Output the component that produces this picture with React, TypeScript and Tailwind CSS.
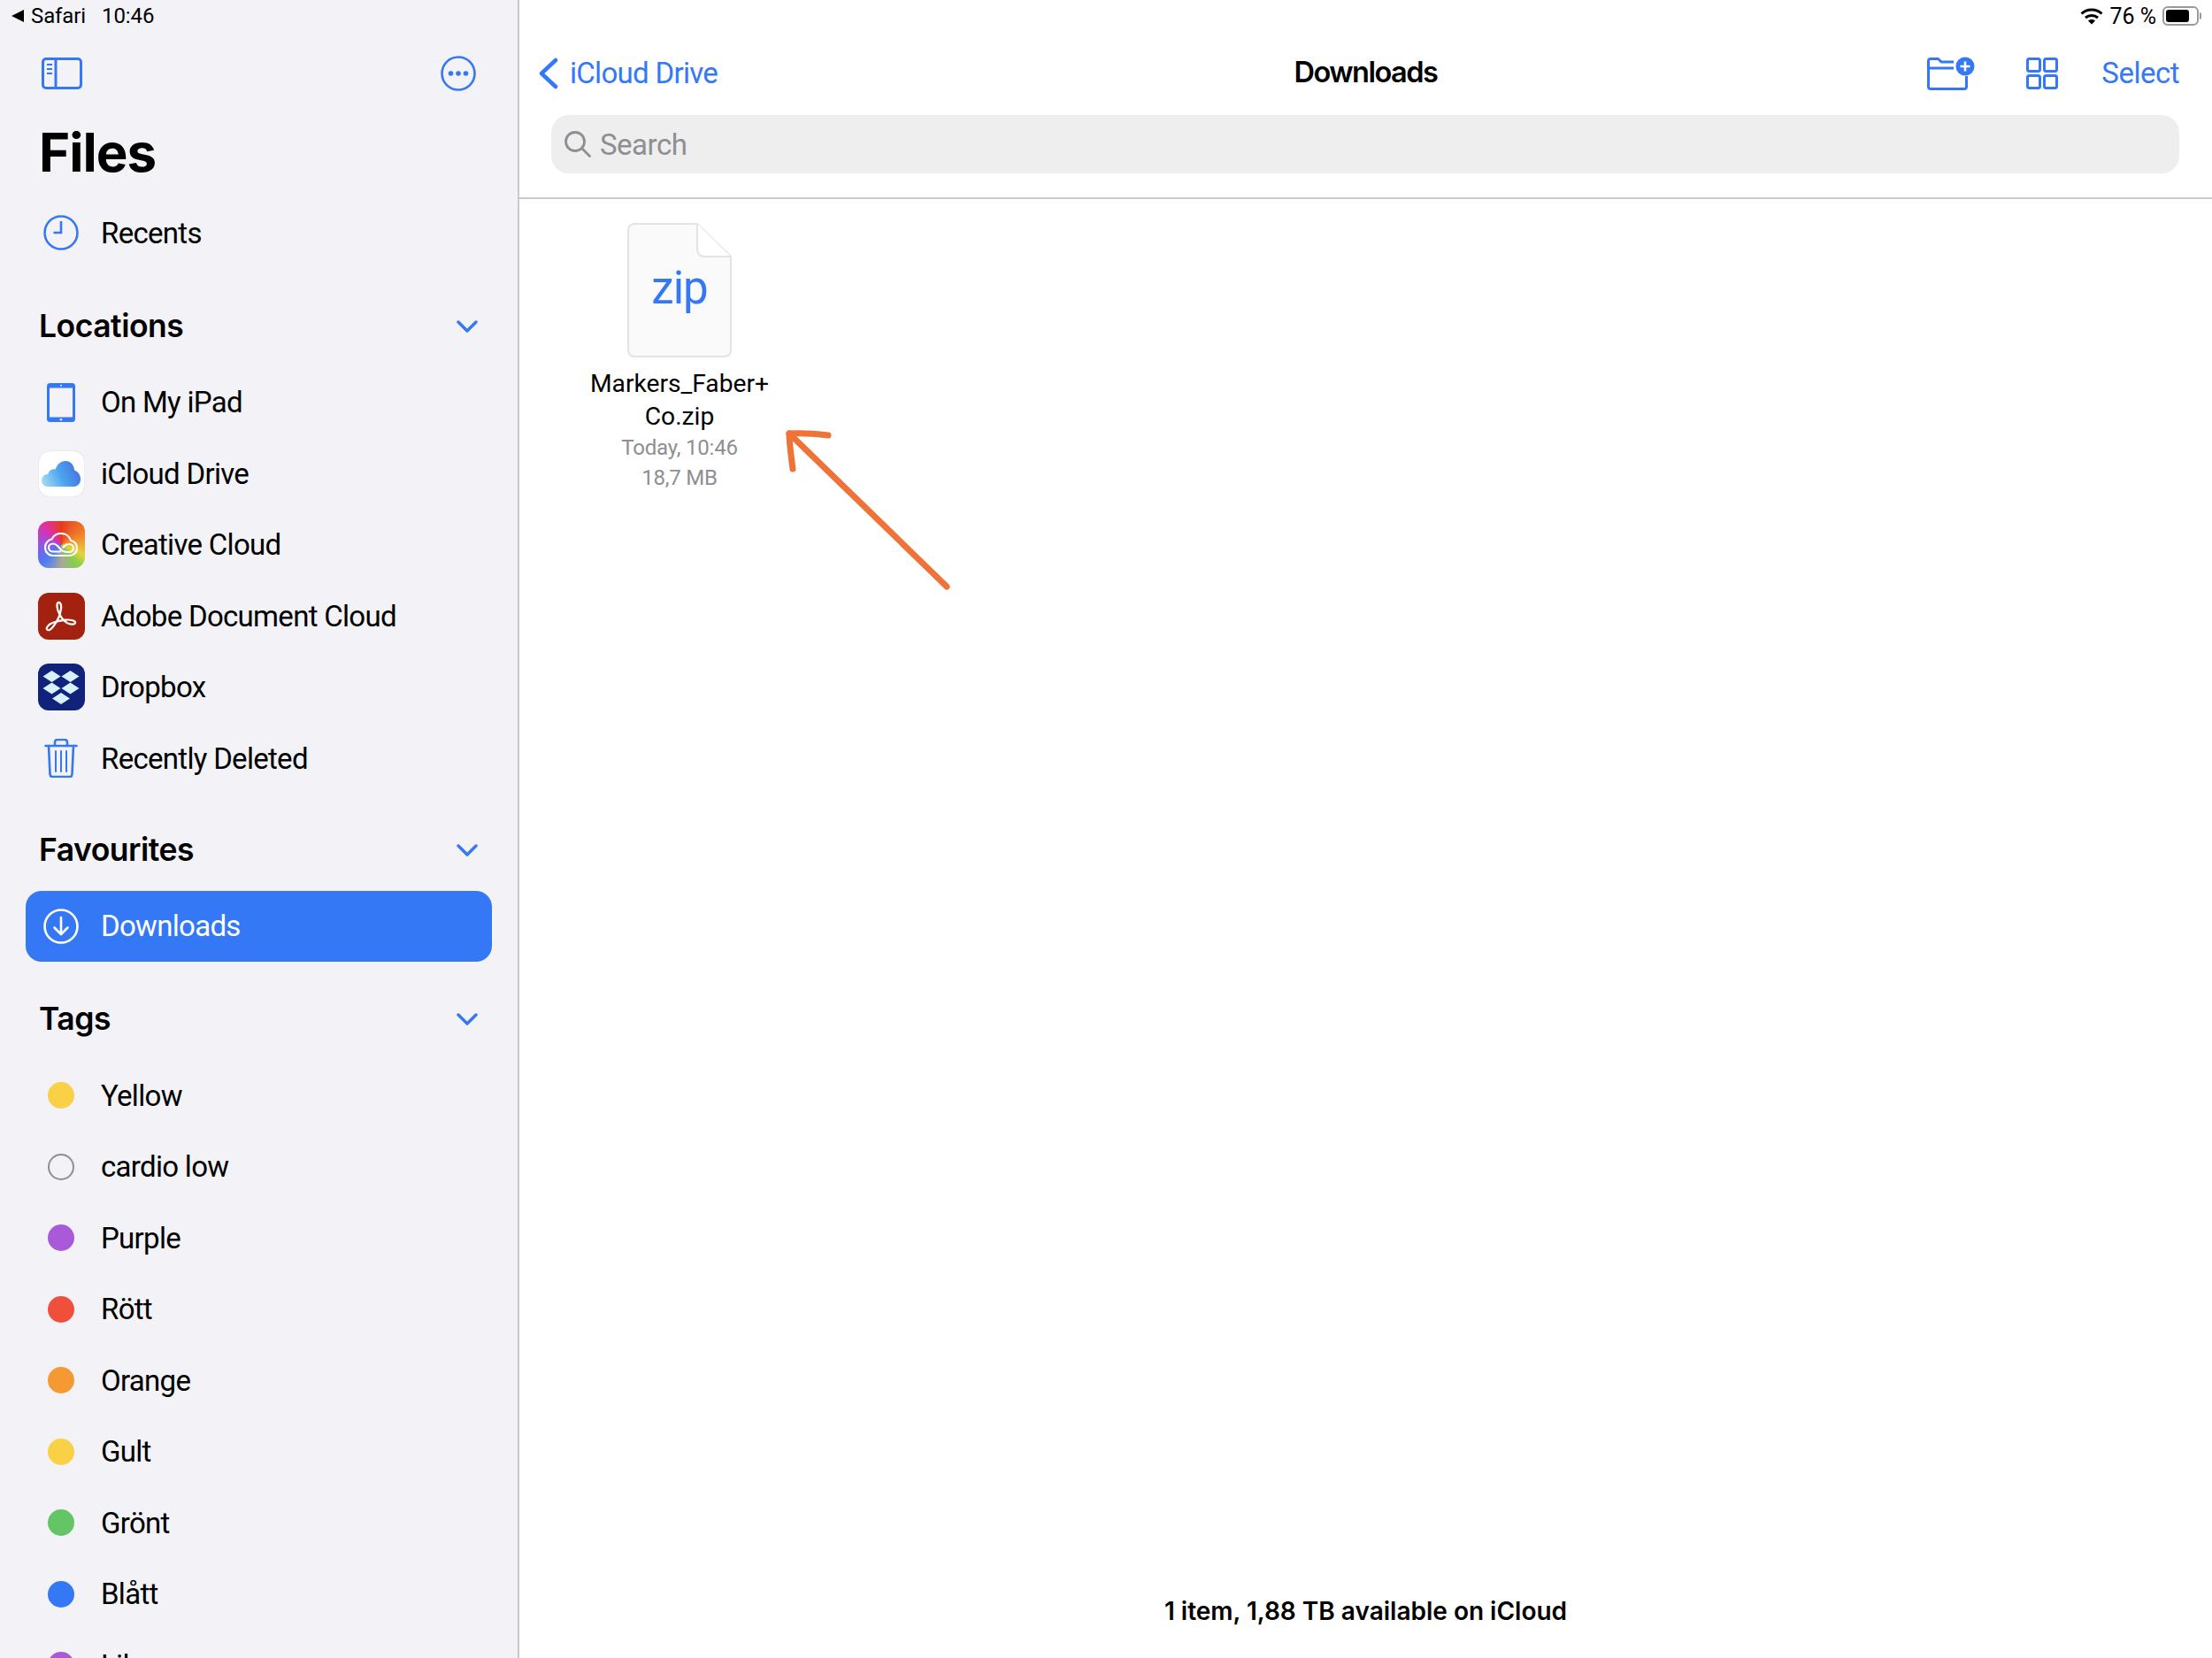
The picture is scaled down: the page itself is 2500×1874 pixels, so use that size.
import { ReactNode } from 'react';

const font = { fontFamily: 'Roboto, "Noto Sans", sans-serif' };
const inter = { fontFamily: 'Inter, "Noto Sans", sans-serif' };

function SidebarToggle() {
    return (
        <svg width="46" height="36" viewBox="0 0 46 36" fill="none" stroke="#3478f6" strokeWidth="3">
            <rect x="1.500" y="1.500" width="43" height="33" rx="3.500" />
            <path d="M16 1.500v33" />
            <path d="M6 8h6M6 13h6M6 18h6" strokeWidth="2.200" />
        </svg>
    );
}

function MoreIcon() {
    return (
        <svg width="40" height="40" viewBox="0 0 40 40" fill="none">
            <circle cx="20" cy="20" r="18.500" stroke="#3478f6" strokeWidth="2.600" />
            <circle cx="11.500" cy="20" r="2.800" fill="#3478f6" />
            <circle cx="20" cy="20" r="2.800" fill="#3478f6" />
            <circle cx="28.500" cy="20" r="2.800" fill="#3478f6" />
        </svg>
    );
}

function Chevron() {
    return (
        <svg width="24" height="16" viewBox="0 0 24 16" fill="none" stroke="#3478f6" strokeWidth="3.400" strokeLinecap="round" strokeLinejoin="round">
            <path d="M2 3l10 10L22 3" />
        </svg>
    );
}

function ClockIcon() {
    return (
        <svg width="40" height="40" viewBox="0 0 40 40" fill="none" stroke="#3478f6" strokeWidth="2.600">
            <circle cx="20" cy="20" r="18.500" />
            <path d="M20 7v13h-8.500" />
        </svg>
    );
}

function IpadIcon() {
    return (
        <svg width="32" height="44" viewBox="0 0 32 44">
            <rect x="0" y="0" width="32" height="44" rx="3.500" fill="#3478f6" />
            <rect x="3" y="5.500" width="26" height="33" fill="#f2f2f7" />
            <circle cx="16" cy="2.800" r="1" fill="#f2f2f7" />
            <circle cx="16" cy="41.200" r="1.300" fill="#f2f2f7" />
        </svg>
    );
}

function ICloudIcon() {
    return (
        <div className="flex h-[51px] w-[51px] items-center justify-center rounded-[12px] bg-white shadow-[0_0_1px_rgba(0,0,0,0.25)]">
            <svg width="44" height="29" viewBox="0 0 45 32" preserveAspectRatio="none">
                <defs>
                    <linearGradient id="cloud" x1="0" y1="0.8" x2="1" y2="0.5">
                        <stop offset="0" stopColor="#a3dcf5" />
                        <stop offset="0.5" stopColor="#4fa6ef" />
                        <stop offset="1" stopColor="#4373e2" />
                    </linearGradient>
                </defs>
                <path d="M7 32C3 32 0 28.500 0 24.500 0 19.500 3.500 16.500 7.500 16.500 8.500 12 12 9.500 16 10.500 18 4 22.500 0 27.500 0 33.500 0 37.500 5 38 11.500 42 13 45 17.500 45 22.500 45 28.500 41.500 32 36.500 32z" fill="url(#cloud)" />
            </svg>
        </div>
    );
}

function CreativeCloudIcon() {
    return (
        <div className="flex h-[53px] w-[53px] items-center justify-center rounded-[12px] bg-[conic-gradient(from_0deg_at_50%_50%,#e63a1e,#f0842a_65deg,#e8d23c_115deg,#86d04a_140deg,#a8a896_180deg,#4a7cf5_225deg,#9a50e4_275deg,#e42ea0_320deg,#e63a1e)]">
            <svg width="38" height="27" viewBox="0 0 38 27" fill="none" stroke="#fff" strokeWidth="2.200" strokeLinecap="round" strokeLinejoin="round">
                <path d="M10 26H28C33.500 26 37 22 37 17.500 37 13 34 9.500 30 9 28.500 4 24 1 19 1 14.500 1 10.500 3.500 8.500 7.500 4 8.500 1 12.500 1 17 1 22 5 26 10 26z" />
                <path d="M18 21.500H10C7 21.500 5 19.500 5 17 5 14.500 7 12.500 10 12.500 14 12.500 17 17 19 19.500 21 21.500 24 22 28 22 31 22 33 20 33 17.500 33 15 31 13 28 13 25 13 23 14.500 21.500 16.500" />
            </svg>
        </div>
    );
}

function AdobeIcon() {
    return (
        <div className="flex h-[53px] w-[53px] items-center justify-center rounded-[12px] bg-[#a3220f]">
            <svg width="36" height="35" viewBox="0 0 36 38" preserveAspectRatio="none" fill="none" stroke="#fff" strokeWidth="2.300" strokeLinecap="round" strokeLinejoin="round">
                <path d="M2 35c1.500 2.500 4.500.5 7-3 4-5.500 8-14 9-22 .5-4-.5-8-2.500-8-2.500 0-2.500 5-1 10 2 6 6 12 10 15 4 2.500 9 2.500 9.500 0 .5-2.500-5-4-11-3.500C13 25 6 27 3.500 30.500 2 32.500 1.500 34 2 35z" />
            </svg>
        </div>
    );
}

function DropboxIcon() {
    return (
        <div className="flex h-[53px] w-[53px] items-center justify-center rounded-[12px] bg-[#10227a]">
            <svg width="42" height="38" viewBox="0 0 42 38" fill="#d9f0fd">
                <path d="M10.500 0L20.500 6.500 10.500 13 .5 6.500z" />
                <path d="M31.500 0L41.500 6.500 31.500 13 21.500 6.500z" />
                <path d="M10.500 13.500L20.500 20 10.500 26.500 .5 20z" />
                <path d="M31.500 13.500L41.500 20 31.500 26.500 21.500 20z" />
                <path d="M21 25L31 31.500 21 38 11 31.500z" />
            </svg>
        </div>
    );
}

function TrashIcon() {
    return (
        <svg width="38" height="44" viewBox="0 0 38 44" fill="none" stroke="#3478f6" strokeWidth="2.600" strokeLinecap="round" strokeLinejoin="round">
            <path d="M1.500 8h35" />
            <path d="M12 8V4c0-1.700 1.300-3 3-3h8c1.700 0 3 1.300 3 3v4" />
            <path d="M5 8l1.500 32c.1 1.800 1.200 3 3 3h19c1.800 0 2.900-1.200 3-3L33 8" />
            <path d="M13 14v23M19 14v23M25 14v23" strokeWidth="2" />
        </svg>
    );
}

function DownloadIcon() {
    return (
        <svg width="40" height="40" viewBox="0 0 40 40" fill="none" stroke="#fff" strokeWidth="2.600" strokeLinecap="round" strokeLinejoin="round">
            <circle cx="20" cy="20" r="18.500" />
            <path d="M20 10v19M12.500 21.500L20 29l7.500-7.500" />
        </svg>
    );
}

function Dot({ color }: { color: string }) {
    return <div className="h-[30px] w-[30px] rounded-full" style={{ background: color }} />;
}

function Row({ icon, label, active }: { icon: ReactNode; label: string; active?: boolean }) {
    return (
        <div className={`mx-[29px] flex h-[80.5px] w-[527px] items-center rounded-[18px] pl-[12px] ${active ? 'bg-[#3478f6] text-white' : 'text-black'}`}>
            <div className="flex w-[56px] shrink-0 items-center justify-center">{icon}</div>
            <span className="ml-[17px] text-[33px] leading-none tracking-[-0.7px]">{label}</span>
        </div>
    );
}

function SectionHeader({ title }: { title: string }) {
    return (
        <div className="mb-[14px] flex h-16 items-center justify-between pl-[44px] pr-[45px]">
            <span className="text-[35.5px] leading-none font-semibold tracking-[-0.5px] text-black" style={inter}>{title}</span>
            <Chevron />
        </div>
    );
}

const locations = [
    { label: 'On My iPad', icon: <IpadIcon /> },
    { label: 'iCloud Drive', icon: <ICloudIcon /> },
    { label: 'Creative Cloud', icon: <CreativeCloudIcon /> },
    { label: 'Adobe Document Cloud', icon: <AdobeIcon /> },
    { label: 'Dropbox', icon: <DropboxIcon /> },
    { label: 'Recently Deleted', icon: <TrashIcon /> },
];

const tags = [
    { label: 'Yellow', color: '#fad047' },
    { label: 'cardio low', color: '' },
    { label: 'Purple', color: '#a85ad8' },
    { label: 'Rött', color: '#f04f3c' },
    { label: 'Orange', color: '#f59a33' },
    { label: 'Gult', color: '#fad047' },
    { label: 'Grönt', color: '#64c566' },
    { label: 'Blått', color: '#3478f6' },
    { label: 'Lila', color: '#a85ad8' },
];

function Sidebar() {
    return (
        <aside className="flex h-full w-[587px] shrink-0 flex-col overflow-hidden border-r-2 border-[#c9c9cc] bg-[#f2f2f7]">
            <div className="flex h-[36px] shrink-0 items-center pl-[13px] text-[24px] leading-none tracking-[-0.1px] text-black">
                <svg width="14" height="14" viewBox="0 0 14 14" fill="#000"><path d="M14 0v14L0 7z" /></svg>
                <span className="ml-[8px]">Safari</span>
                <span className="ml-[18px]">10:46</span>
            </div>
            <div className="flex h-[94px] shrink-0 items-center justify-between pl-[47px] pr-[47px]">
                <SidebarToggle />
                <MoreIcon />
            </div>
            <div className="flex h-[84px] shrink-0 items-center pl-[44px] text-[60px] leading-none font-bold tracking-[-1px] text-black" style={inter}>Files</div>
            <div className="mt-[9px]">
                <Row icon={<ClockIcon />} label="Recents" />
            </div>
            <div className="mt-[33px]">
                <SectionHeader title="Locations" />
                {locations.map((item) => (
                    <Row key={item.label} icon={item.icon} label={item.label} />
                ))}
            </div>
            <div className="mt-[31px]">
                <SectionHeader title="Favourites" />
                <Row active icon={<DownloadIcon />} label="Downloads" />
            </div>
            <div className="mt-[33px]">
                <SectionHeader title="Tags" />
                {tags.map((tag) => (
                    <Row
                        key={tag.label}
                        label={tag.label}
                        icon={
                            tag.color ? (
                                <Dot color={tag.color} />
                            ) : (
                                <div className="h-[30px] w-[30px] rounded-full border-2 border-[#8e8e93]" />
                            )
                        }
                    />
                ))}
            </div>
        </aside>
    );
}

function StatusRight() {
    return (
        <div className="flex h-[36px] shrink-0 items-center justify-end pr-[12px] text-[25px] leading-none text-black">
            <svg width="26" height="19" viewBox="0 0 26 19" fill="none" stroke="#000" strokeWidth="3">
                <path d="M1.500 6.500C8 .5 18 .5 24.500 6.500" />
                <path d="M6 11c4-3.500 10-3.500 14 0" />
                <path d="M13 18.500l-4-4c2-2 6-2 8 0z" fill="#000" stroke="none" />
            </svg>
            <span className="ml-[7px]">76 %</span>
            <div className="ml-[7px] flex h-[22px] w-[41px] items-center rounded-[6px] border-2 border-[#9a9a9a] p-[2px]">
                <div className="h-full w-[26px] rounded-[3px] bg-black" />
            </div>
            <div className="ml-[1px] h-[8px] w-[2px] rounded-r-full bg-[#9a9a9a]" />
        </div>
    );
}

function NewFolderIcon() {
    return (
        <svg width="54" height="38" viewBox="0 0 54 38" fill="none" stroke="#3478f6" strokeWidth="3" strokeLinejoin="round">
            <path d="M30 6H16l-3.500-3.500H4C2.300 2.500 1.500 3.500 1.500 5v29c0 1.700.8 2.500 2.500 2.500h38c1.700 0 2.500-.8 2.500-2.500V22" />
            <path d="M1.500 13H30" />
            <circle cx="43" cy="11" r="10.500" fill="#3478f6" stroke="none" />
            <path d="M43 5.500v11M37.500 11h11" stroke="#fff" strokeWidth="2.600" />
        </svg>
    );
}

function GridIcon() {
    return (
        <svg width="36" height="36" viewBox="0 0 36 36" fill="none" stroke="#3478f6" strokeWidth="3">
            <rect x="1.500" y="1.500" width="14" height="14" rx="2" />
            <rect x="20.500" y="1.500" width="14" height="14" rx="2" />
            <rect x="1.500" y="20.500" width="14" height="14" rx="2" />
            <rect x="20.500" y="20.500" width="14" height="14" rx="2" />
        </svg>
    );
}

function SearchIcon() {
    return (
        <svg width="30" height="30" viewBox="0 0 30 30" fill="none" stroke="#8e8e93" strokeWidth="2.800" strokeLinecap="round">
            <circle cx="12" cy="12" r="10.500" />
            <path d="M20 20l8.500 8.500" />
        </svg>
    );
}

function FileIcon() {
    return (
        <div className="relative h-[152px] w-[118px]">
            <svg width="118" height="152" viewBox="0 0 118 152" fill="none" className="absolute inset-0">
                <path d="M8 1h71l38 37v105c0 5-3 8-8 8H8c-5 0-7-3-7-8V8c0-4 3-7 7-7z" fill="#fafafa" stroke="#e3e3e3" strokeWidth="2" />
                <path d="M79 1v28c0 6 3 9 9 9h29" fill="#fff" stroke="#e3e3e3" strokeWidth="2" />
            </svg>
            <div className="absolute inset-x-0 top-[44px] text-center text-[51px] leading-[60px] tracking-[-1px] text-[#3478f6]">zip</div>
        </div>
    );
}

function Main() {
    return (
        <main className="relative flex h-full min-w-0 flex-1 flex-col bg-white">
            <StatusRight />
            <div className="grid h-[93px] shrink-0 grid-cols-[1fr_auto_1fr] items-center px-[21px]">
                <div className="flex items-center text-[33px] leading-none tracking-[-0.7px] text-[#3478f6]">
                    <svg width="24" height="36" viewBox="0 0 24 36" fill="none" stroke="#3478f6" strokeWidth="4.500" strokeLinecap="round" strokeLinejoin="round">
                        <path d="M20 3L4 18l16 15" />
                    </svg>
                    <span className="ml-[12px]">iCloud Drive</span>
                </div>
                <div className="text-[32.5px] leading-none font-semibold tracking-[-1.5px] text-black" style={inter}>Downloads</div>
                <div className="flex items-center justify-end pr-[16px] text-[33px] leading-none tracking-[-0.5px] text-[#3478f6]">
                    <NewFolderIcon />
                    <div className="ml-[58px]"><GridIcon /></div>
                    <span className="ml-[49px]">Select</span>
                </div>
            </div>
            <div className="mt-[1px] shrink-0 border-b-2 border-[#c9c9cc] pb-[27px] pl-[36px] pr-[37px]">
                <div className="flex h-[66px] items-center rounded-[20px] bg-[#eeeeef] pl-[15px]">
                    <SearchIcon />
                    <span className="ml-[10px] text-[33px] leading-none tracking-[-0.5px] text-[#8e8e93]">Search</span>
                </div>
            </div>
            <div className="ml-[51px] flex w-[260px] flex-col items-center pt-[27px]">
                <FileIcon />
                <div className="mt-[11px] text-center text-[28.2px] leading-[37px] text-black">
                    Markers_Faber+
                    <br />
                    Co.zip
                </div>
                <div className="mt-[1px] text-center text-[24px] leading-[33.5px] tracking-[-0.2px] text-[#8e8e93]">
                    Today, 10:46
                    <br />
                    18,7 MB
                </div>
            </div>
            <div className="mb-[33px] mt-auto flex h-[40px] shrink-0 items-center justify-center text-[28px] leading-none font-semibold text-black" style={inter}>
                1 item, 1,88 TB available on iCloud
            </div>
            {/* hand drawn annotation arrow */}
            <svg className="absolute left-[281px] top-[470px]" width="220" height="210" viewBox="0 0 220 210" fill="none" stroke="#ee7339" strokeWidth="7" strokeLinecap="round" strokeLinejoin="round">
                <path d="M202 193L24 20" />
                <path d="M28 60C26 45 24 30 24 20 38 19 52 20 68 22" />
            </svg>
        </main>
    );
}

export default function App() {
    return (
        <div className="flex h-[1874px] w-[2500px] overflow-hidden" style={font}>
            <Sidebar />
            <Main />
        </div>
    );
}
